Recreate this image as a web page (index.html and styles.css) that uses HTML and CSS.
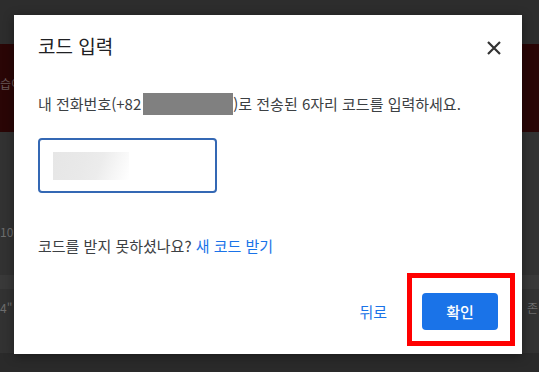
FILE: index.html
```html
<!DOCTYPE html>
<html lang="ko">
<head>
<meta charset="utf-8">
<link rel="stylesheet" href="styles.css">
</head>
<body>
<div class="page">
  <div class="topbar"></div>
  <div class="banner"><span class="bg-text">습이</span></div>
  <div class="rows">
    <div class="row row-a"><span class="bg-text">10</span></div>
    <div class="row row-line"></div>
    <div class="row row-b"><span class="bg-text">4"</span><span class="bg-text">존</span></div>
    <div class="row row-c"></div>
  </div>
</div>

<div class="dialog">
  <div class="header">
    <h1 class="title">코드 입력</h1>
    <button class="close" aria-label="닫기">
      <svg width="14" height="14" viewBox="0 0 14 14"><path d="M1 1L13 13M13 1L1 13" stroke="#333" stroke-width="2.2" fill="none"/></svg>
    </button>
  </div>
  <p class="message">내 전화번호(+82<span class="redact"></span>)로 전송된 6자리 코드를 입력하세요.</p>
  <div class="input"><span class="blur"></span></div>
  <p class="resend">코드를 받지 못하셨나요? <a class="link">새 코드 받기</a></p>
  <div class="footer">
    <button class="text-btn">뒤로</button>
    <button class="primary">확인</button>
  </div>
</div>
<div class="highlight"></div>
</body>
</html>
```

FILE: styles.css
```css
html, body {
  margin: 0;
  padding: 0;
  width: 539px;
  height: 372px;
  overflow: hidden;
  background: #2e2e2e;
  font-family: "Noto Sans CJK KR", "Noto Sans", sans-serif;
}
.page {
  display: flex;
  flex-direction: column;
  height: 372px;
}
.topbar {
  height: 44px;
  background: #2d2d2d;
}
.banner {
  height: 88px;
  background: #2a0606;
  display: flex;
  align-items: center;
  padding-bottom: 10px;
  box-sizing: border-box;
}
.bg-text {
  color: #6e6e6e;
  font-size: 12px;
}
.banner .bg-text {
  color: #6a5a5a;
}
.rows {
  flex: 1;
  display: flex;
  flex-direction: column;
  background: #323232;
}
.row-a {
  height: 143px;
  display: flex;
  align-items: flex-end;
  padding-bottom: 35px;
  box-sizing: border-box;
}
.row-line {
  height: 14px;
  background: #393939;
}
.row-b {
  height: 64px;
  display: flex;
  justify-content: space-between;
  align-items: flex-start;
  padding-top: 10px;
  box-sizing: border-box;
}
.row-b .bg-text:last-child { margin-right: 1px; }
.row-c {
  flex: 1;
  background: #2a2a2a;
}

.dialog {
  position: absolute;
  left: 14px;
  top: 15px;
  width: 508px;
  height: 339px;
  box-sizing: border-box;
  background: #fff;
  padding: 17px 24px 24px 24px;
  display: flex;
  flex-direction: column;
  box-shadow: 0 2px 10px rgba(0,0,0,0.4);
}
.header {
  display: flex;
  align-items: center;
  justify-content: space-between;
  height: 28px;
}
.title {
  margin: 0;
  font-size: 19px;
  font-weight: 400;
  line-height: 28px;
  color: #202124;
}
.close {
  width: 24px;
  height: 24px;
  margin-right: -8px;
  margin-top: 3px;
  padding: 0;
  border: 0;
  background: none;
  display: flex;
  align-items: center;
  justify-content: center;
}
.message {
  margin: 33px 0 0 0;
  font-size: 15px;
  line-height: 22px;
  color: #3c4043;
  white-space: nowrap;
}
.redact {
  display: inline-block;
  width: 90px;
  height: 22px;
  background: #808080;
  vertical-align: top;
  margin-left: 2px;
}
.input {
  margin-top: 23px;
  width: 179px;
  height: 55px;
  box-sizing: border-box;
  border: 2px solid #3468b4;
  border-radius: 4px;
  padding: 12px 0 0 13px;
}
.blur {
  display: block;
  width: 76px;
  height: 28px;
  background: linear-gradient(110deg, #e6e6e6 0%, #e9e9e9 40%, #ececec 60%, #f6f6f6 80%, #fff 100%);
}
.resend {
  margin: 43px 0 0 0;
  font-size: 15px;
  line-height: 20px;
  color: #3c4043;
}
.link {
  color: #1a73e8;
}
.footer {
  margin-top: auto;
  display: flex;
  justify-content: flex-end;
  align-items: center;
  gap: 35px;
}
.text-btn {
  border: 0;
  background: none;
  padding: 0;
  font-family: inherit;
  font-size: 15px;
  color: #1a73e8;
}
.primary {
  width: 76px;
  height: 37px;
  border: 0;
  border-radius: 4px;
  background: #1a73e8;
  color: #fff;
  font-family: inherit;
  font-size: 15px;
  font-weight: 500;
  padding: 0;
}
.highlight {
  position: absolute;
  left: 407px;
  top: 273px;
  width: 108px;
  height: 73px;
  box-sizing: border-box;
  border: 5px solid #ff0000;
}
```
